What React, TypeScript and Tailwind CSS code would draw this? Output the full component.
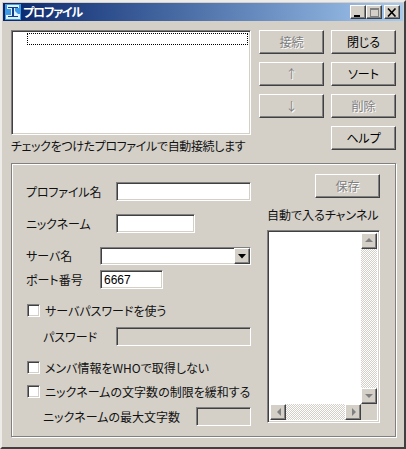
const font = "font-['Noto_Sans_CJK_JP','Liberation_Sans',sans-serif] [font-feature-settings:'palt']";

const raisedCls =
  "bg-[#d4d0c8] border-t border-l border-t-white border-l-white border-r border-b border-r-[#404040] border-b-[#404040] shadow-[inset_-1px_-1px_0_#808080]";
const sunkenCls =
  "border-t border-l border-t-[#808080] border-l-[#808080] border-r border-b border-r-white border-b-white shadow-[inset_1px_1px_0_#404040,inset_-1px_-1px_0_#d4d0c8]";
const ditherCls = "bg-[repeating-conic-gradient(#d4d0c8_0_25%,#ffffff_0_50%)] bg-[length:2px_2px]";

function Btn({ label, disabled, className = "" }: { label: string; disabled?: boolean; className?: string }) {
  return (
    <div
      className={`${raisedCls} w-[65px] h-[24px] flex items-center justify-center text-[12px] leading-none ${
        disabled ? "text-[#808080] [text-shadow:1px_1px_0_#ffffff]" : "text-black"
      } ${className}`}
    >
      {label}
    </div>
  );
}

function Input({ className, value, disabled }: { className: string; value?: string; disabled?: boolean }) {
  return (
    <div
      className={`${sunkenCls} ${disabled ? "bg-[#d4d0c8]" : "bg-white"} flex items-center pl-[3px] text-[12px] text-black leading-none ${className}`}
    >
      {value}
    </div>
  );
}

function Check({ label }: { label: string }) {
  return (
    <div className="flex items-center h-[13px] pl-[1px]">
      <div className={`${sunkenCls} bg-white w-[13px] h-[13px] shrink-0`} />
      <span className="ml-[5px] text-[12px] leading-none whitespace-nowrap text-[#111]">{label}</span>
    </div>
  );
}

function Arrow({ dir, color = "#808080" }: { dir: "up" | "down" | "left" | "right"; color?: string }) {
  const pts = {
    up: "4,9 8,5 12,9",
    down: "4,6 12,6 8,10",
    left: "10,3 10,11 6,7",
    right: "6,3 6,11 10,7",
  }[dir];
  return (
    <svg width="14" height="14" viewBox="0 0 14 14" className="block">
      <polygon points={pts} fill={color} transform={dir === "up" || dir === "down" ? "translate(-1,-1)" : undefined} />
    </svg>
  );
}

function ScrollBtn({ dir }: { dir: "up" | "down" | "left" | "right" }) {
  return (
    <div className={`${raisedCls} w-[16px] h-[16px] flex items-center justify-center`}>
      <Arrow dir={dir} />
    </div>
  );
}

function TitleButton({ children, className = "" }: { children: React.ReactNode; className?: string }) {
  return <div className={`${raisedCls} w-[16px] h-[14px] flex items-center justify-center ${className}`}>{children}</div>;
}

export default function App() {
  return (
    <div className={`${font} w-[406px] h-[449px] overflow-hidden bg-[#d4d0c8] border-t-2 border-l-2 border-t-[#eeece8] border-l-[#eeece8] border-r-2 border-b-2 border-r-[#404040] border-b-[#404040] p-[1px]`}>
      {/* title bar */}
      <div className="h-[18px] flex items-center bg-gradient-to-r from-[#0a246a] to-[#a6caf0] pl-[2px] pr-[3px]">
        <svg width="16" height="16" viewBox="0 0 16 16" className="shrink-0">
          <rect width="16" height="16" fill="#3f9ae6" />
          <path d="M2 1h12v3H10v3l3 3h2v5H1v-4h5V5H2z" fill="#dff0ff" />
          <path d="M3 3h10v1H9v8h4v1H3v-1h4V4H3z" fill="#123f8c" />
        </svg>
        <span className="ml-[2px] text-white font-bold text-[12px] tracking-[-1.2px] leading-none">プロファイル</span>
        <div className="ml-auto flex">
          <TitleButton>
            <div className="w-[6px] h-[2px] bg-black mt-[7px] mr-[2px]" />
          </TitleButton>
          <TitleButton className="mr-[2px]">
            <div className="w-[9px] h-[9px] border border-[#808080] border-t-2" />
          </TitleButton>
          <TitleButton>
            <svg width="10" height="9" viewBox="0 0 10 9">
              <path d="M1 0.5l7.5 8M8.5 0.5l-7.5 8" stroke="#000" strokeWidth="1.6" fill="none" />
            </svg>
          </TitleButton>
        </div>
      </div>

      <div className="pl-[8px] pt-[9px]">
        {/* profile list and buttons */}
        <div className="flex h-[120px]">
          <div className="w-[240px]">
            <div className={`${sunkenCls} bg-white h-[105px] pt-[2px] pr-[2px]`}>
              <div className="ml-[15px] h-[12px] border border-dotted border-black" />
            </div>
            <div className="mt-[3px] text-[12px] leading-[16px] tracking-[-0.35px] whitespace-nowrap text-[#111]">
              チェックをつけたプロファイルで自動接続します
            </div>
          </div>
          <div className="ml-[8px] grid grid-cols-[65px_65px] gap-x-[7px] gap-y-[8px] h-[120px]">
            <Btn label="接続" disabled />
            <Btn label="閉じる" />
            <Btn label="↑" disabled />
            <Btn label="ソート" />
            <Btn label="↓" disabled />
            <Btn label="削除" disabled />
            <div />
            <Btn label="ヘルプ" />
          </div>
        </div>

        {/* settings group */}
        <div className="mt-[13px] w-[385px] h-[274px] border border-[#808080] shadow-[inset_1px_1px_0_#ffffff,1px_1px_0_#ffffff] flex pl-[14px] pt-[1px] text-[12px] text-[#111]">
          <div className="w-[225px] flex flex-col">
            <div className="mt-[17px] flex items-center h-[19px]">
              <span className="w-[90px] leading-none tracking-[-0.15px]">プロファイル名</span>
              <Input className="w-[135px] h-[19px]" />
            </div>
            <div className="mt-[13px] flex items-center h-[19px]">
              <span className="w-[90px] leading-none tracking-[-0.15px]">ニックネーム</span>
              <Input className="w-[79px] h-[19px]" />
            </div>
            <div className="mt-[14px] flex items-center h-[18px]">
              <span className="w-[74px] leading-none">サーバ名</span>
              <div className={`${sunkenCls} bg-white w-[151px] h-[18px] flex justify-end items-start`}>
                <div className={`${raisedCls} w-[16px] h-[16px] flex items-center justify-center`}>
                  <svg width="8" height="5" viewBox="0 0 8 5">
                    <polygon points="0,0 8,0 4,4.5" fill="#000" />
                  </svg>
                </div>
              </div>
            </div>
            <div className="mt-[5px] flex items-center h-[19px]">
              <span className="w-[74px] leading-none">ポート番号</span>
              <Input className="w-[63px] h-[19px] font-['Liberation_Sans',sans-serif] text-[11px]" value="6667" />
            </div>
            <div className="mt-[15px]">
              <Check label="サーバパスワードを使う" />
            </div>
            <div className="mt-[10px] flex items-center h-[19px] pl-[17px]">
              <span className="w-[73px] leading-none">パスワード</span>
              <Input className="w-[135px] h-[19px]" disabled />
            </div>
            <div className="mt-[15px]">
              <Check label="メンバ情報をWHOで取得しない" />
            </div>
            <div className="mt-[11px]">
              <Check label="ニックネームの文字数の制限を緩和する" />
            </div>
            <div className="mt-[9px] flex items-center h-[19px] pl-[17px]">
              <span className="w-[153px] leading-none whitespace-nowrap">ニックネームの最大文字数</span>
              <Input className="w-[55px] h-[19px]" disabled />
            </div>
          </div>

          <div className="ml-[16px] w-[113px] flex flex-col">
            <Btn label="保存" disabled className="self-end mt-[9px]" />
            <div className="mt-[9px] h-[16px] leading-[16px] whitespace-nowrap">自動で入るチャンネル</div>
            <div className={`${sunkenCls} bg-white mt-[7px] h-[193px] p-[2px] grid grid-cols-[1fr_16px] grid-rows-[1fr_16px]`}>
              <div className="bg-white" />
              <div className={`${ditherCls} flex flex-col justify-between`}>
                <ScrollBtn dir="up" />
                <ScrollBtn dir="down" />
              </div>
              <div className={`${ditherCls} flex justify-between`}>
                <ScrollBtn dir="left" />
                <ScrollBtn dir="right" />
              </div>
              <div className="bg-[#d4d0c8]" />
            </div>
          </div>
        </div>
      </div>
    </div>
  );
}
